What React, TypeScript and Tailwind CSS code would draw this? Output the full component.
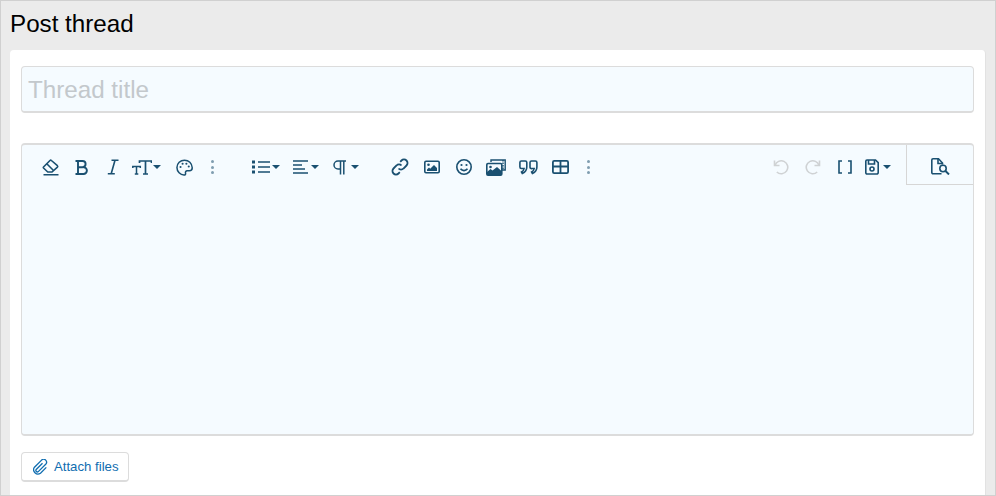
const iconClass = "fill-none stroke-[#1a5071] stroke-[1.6]"

function Caret({ gap = "ml-[2px]" }: { gap?: string }) {
  return <span className={"h-0 w-0 border-x-[4px] border-t-[4px] border-x-transparent border-t-[#1a5071] " + gap} />
}

function Dots() {
  return (
    <div className="flex w-[3px] flex-col gap-[2.5px]">
      <span className="h-[3px] w-[3px] rounded-full bg-[#7f9db0]" />
      <span className="h-[3px] w-[3px] rounded-full bg-[#7f9db0]" />
      <span className="h-[3px] w-[3px] rounded-full bg-[#7f9db0]" />
    </div>
  )
}

function Eraser() {
  return (
    <svg width="18" height="18" viewBox="0 0 18 18" className={iconClass}>
      <path d="M1.500 9 8 2.500a1 1 0 0 1 1.400 0l6 5.200a1 1 0 0 1 0 1.400L10 14H5.800L1.500 10a.7.7 0 0 1 0-1z" />
      <path d="m4.800 5.800 6.700 6.700M1.500 16.800h15" />
    </svg>
  )
}

function Bold() {
  return (
    <svg width="13" height="15" viewBox="0 0 13 15" className={iconClass}>
      <path d="M.5 1H7.500a3 3 0 0 1 0 6.200H3M3 1v13M.5 14H8.500a3.400 3.400 0 0 0 0-6.800" strokeWidth="1.900" />
    </svg>
  )
}

function Italic() {
  return (
    <svg width="12" height="16" viewBox="0 0 12 16" className={iconClass}>
      <path d="M4.500 1.200h7M.8 14.800h7M8 1.200 4.200 14.800" />
    </svg>
  )
}

function TextSize() {
  return (
    <svg width="20" height="15" viewBox="0 0 20 15" className={iconClass}>
      <path d="M7.500 3V1h12v2M13.500 1v13M11 14h5" strokeWidth="1.700" />
      <path d="M.8 8V6.500h7.500V8M4.500 6.500V14M2.800 14h3.500" strokeWidth="1.500" />
    </svg>
  )
}

function Palette() {
  return (
    <svg width="17" height="17" viewBox="0 0 18 18" className={iconClass}>
      <path d="M9 1.200C4.600 1.200 1 4.600 1 9s3.600 8 7.400 8c1.500 0 2-1 1.700-2-.4-1.300.2-2.500 1.700-2.500h2.400c1.800 0 3-1.300 3-3.200C17 4.500 13.400 1.200 9 1.200z" />
      <g className="fill-[#1a5071] stroke-none">
        <circle cx="4.800" cy="8.500" r="1.100" />
        <circle cx="7" cy="5" r="1.100" />
        <circle cx="11" cy="5" r="1.100" />
        <circle cx="13.500" cy="8" r="1.100" />
      </g>
    </svg>
  )
}

function ListIcon() {
  return (
    <svg width="18" height="14" viewBox="0 0 18 14" className={iconClass}>
      <path d="M6 2h12M6 7h12M6 12h12" strokeWidth="1.500" />
      <g className="fill-[#1a5071] stroke-none">
        <rect x="0" y="0.500" width="3" height="3" />
        <rect x="0" y="5.500" width="3" height="3" />
        <rect x="0" y="10.500" width="3" height="3" />
      </g>
    </svg>
  )
}

function AlignIcon() {
  return (
    <svg width="15" height="14" viewBox="0 0 15 14" className={iconClass}>
      <path d="M0 1h15M0 5h9M0 9h12M0 13h15" strokeWidth="1.300" />
    </svg>
  )
}

function Paragraph() {
  return (
    <svg width="13" height="15" viewBox="0 0 13 15" className={iconClass}>
      <path d="M13 1H5a4 4 0 0 0 0 8h2.500M7.500 1v13.500M10.800 1v13.500" strokeWidth="1.500" />
    </svg>
  )
}

function LinkIcon() {
  return (
    <svg width="18" height="18" viewBox="0 0 18 18" className={iconClass}>
      <path d="M7.500 10.500a3.400 3.400 0 0 0 5 0l3-3a3.500 3.500 0 0 0-5-5l-1.300 1.300" strokeWidth="1.800" />
      <path d="M10.500 7.500a3.400 3.400 0 0 0-5 0l-3 3a3.500 3.500 0 0 0 5 5l1.300-1.300" strokeWidth="1.800" />
    </svg>
  )
}

function ImageIcon() {
  return (
    <svg width="16" height="14" viewBox="0 0 16 14" className={iconClass}>
      <rect x="0.800" y="1.300" width="14.400" height="11.400" rx="1.200" />
      <path className="fill-[#1a5071] stroke-none" d="M3 11V9.500l2-2 1.200 1.200L10 5l3 3v3z" />
      <circle className="fill-[#1a5071] stroke-none" cx="4.500" cy="4.800" r="1.300" />
    </svg>
  )
}

function Smile() {
  return (
    <svg width="16" height="16" viewBox="0 0 16 16" className={iconClass}>
      <circle cx="8" cy="8" r="7.200" />
      <path d="M4.500 9.800c1.800 2.400 5.200 2.400 7 0" />
      <circle className="fill-[#1a5071] stroke-none" cx="5.500" cy="6" r="1.100" />
      <circle className="fill-[#1a5071] stroke-none" cx="10.500" cy="6" r="1.100" />
    </svg>
  )
}

function Gallery() {
  return (
    <svg width="20" height="17" viewBox="0 0 20 17" className={iconClass}>
      <path d="M5 3V1h14.200v10H16" strokeWidth="1.400" />
      <path d="M17 1v10" strokeWidth="1.400" strokeDasharray="1.500 1" />
      <rect x="0.800" y="4.500" width="15" height="11.700" rx="1.200" />
      <path className="fill-[#1a5071] stroke-none" d="M1 16v-3l3.500-3 2 1.500L11 8l4.500 4v4z" />
      <circle className="fill-[#1a5071] stroke-none" cx="4.500" cy="8" r="1.300" />
    </svg>
  )
}

function Quote() {
  return (
    <svg width="19" height="15" viewBox="0 0 19 15" className={iconClass}>
      <path d="M.9 2.500A1.500 1.500 0 0 1 2.400 1h3.900a1.500 1.500 0 0 1 1.500 1.500v4.500c0 3-1.700 5.200-4.500 6.500l-.8-1.500c1.500-.8 2.400-1.900 2.600-3.500H2.400A1.500 1.500 0 0 1 .9 7z" />
      <path d="M11 2.500A1.500 1.500 0 0 1 12.500 1h3.900a1.500 1.500 0 0 1 1.500 1.500v4.500c0 3-1.700 5.200-4.500 6.500l-.8-1.500c1.500-.8 2.400-1.900 2.600-3.500h-2.100A1.500 1.500 0 0 1 11 7z" />
    </svg>
  )
}

function TableIcon() {
  return (
    <svg width="17" height="14" viewBox="0 0 17 14" className={iconClass}>
      <rect x="0.900" y="0.900" width="15.200" height="12.200" rx="1.300" strokeWidth="1.800" />
      <path d="M0 6.500h17M8.500 1v12" strokeWidth="1.800" />
    </svg>
  )
}

function Undo({ flip }: { flip?: boolean }) {
  return (
    <svg width="16" height="16" viewBox="0 0 16 16" className={"fill-none stroke-[#cfd2d4] stroke-[1.6] " + (flip ? "-scale-x-100" : "")}>
      <path d="M1.500 1.500v5h5" />
      <path d="M2 6.500A6.500 6.500 0 1 1 3.800 13" />
    </svg>
  )
}

function Brackets() {
  return (
    <svg width="14" height="14" viewBox="0 0 14 14" className={iconClass}>
      <path d="M4 1H1v12h3M10 1h3v12h-3" strokeWidth="1.600" />
    </svg>
  )
}

function Save() {
  return (
    <svg width="14" height="16" viewBox="0 0 14 16" className={iconClass}>
      <path d="M2 1h8.500L13.200 3.700V13.500A1.500 1.500 0 0 1 11.700 15H2A1.200 1.200 0 0 1 .8 13.800V2.200A1.200 1.200 0 0 1 2 1z" />
      <path d="M3.500 1v4h6V1" />
      <circle cx="7" cy="10" r="2" />
    </svg>
  )
}

function Preview() {
  return (
    <svg width="19" height="17" viewBox="0 0 19 17" className={iconClass}>
      <path d="M10.500 15.800H2a1.200 1.200 0 0 1-1.200-1.200V2A1.200 1.200 0 0 1 2 .8h5.500L11.500 5v1.500" />
      <path d="M7 1v4.500h4.500" />
      <circle cx="12" cy="10.500" r="3.200" />
      <path d="m14.500 13 3.500 3.500" strokeWidth="1.900" />
    </svg>
  )
}

function Paperclip() {
  return (
    <svg width="15" height="16" viewBox="0 0 15 16" className="fill-none stroke-[#0f6db0] stroke-[1.3]">
      <path d="M9.500 4.200 3.200 10.500a1.500 1.500 0 0 0 2.100 2.100l7.400-7.400a2.900 2.900 0 0 0-4.100-4.100L1.500 8.200a4.300 4.300 0 0 0 6 6l5.800-5.800" />
    </svg>
  )
}

function Cell({ w, children }: { w: string; children: React.ReactNode }) {
  return <div className={"flex h-[44px] items-center justify-center " + w}>{children}</div>
}

export default function App() {
  return (
    <div className="flex h-[496px] w-[996px] flex-col border border-[#d0d0d0] bg-[#ebebeb] px-[9px] font-['Liberation_Sans',Arial,sans-serif]">
      <h1 className="h-[49px] pt-[9px] text-[24.2px] leading-[28px] text-black">Post thread</h1>
      <div className="flex min-h-0 flex-1 flex-col rounded-t-[4px] border-r border-[#e2e2e2] bg-white px-[11px] pt-[16px]">
        <input
          placeholder="Thread title"
          className="h-[47px] w-full rounded-[4px] border border-b-2 border-[#dcdcdc] bg-[#f5fbff] px-[6px] pt-[2px] text-[24.2px] outline-none placeholder:text-[#c3c8cc]"
        />
        <div className="mt-[30px] h-[293px] rounded-[4px] border border-t-2 border-b-2 border-[#dcdcdc] bg-[#f5fbff]">
          <div className="flex items-start">
            <div className="flex items-center pl-[13px]">
              <Cell w="w-[31px]"><Eraser /></Cell>
              <Cell w="w-[31px]"><Bold /></Cell>
              <Cell w="w-[31px]"><Italic /></Cell>
              <Cell w="w-[36px]"><TextSize /><Caret gap="ml-[1px]" /></Cell>
              <Cell w="w-[31px] ml-[5px]"><Palette /></Cell>
              <Cell w="w-[25px]"><Dots /></Cell>
              <Cell w="w-[40px] ml-[21px]"><ListIcon /><Caret /></Cell>
              <Cell w="w-[40px]"><AlignIcon /><Caret gap="ml-[3px]" /></Cell>
              <Cell w="w-[40px]"><Paragraph /><Caret gap="ml-[5px]" /></Cell>
              <Cell w="w-[32px] ml-[18px]"><LinkIcon /></Cell>
              <Cell w="w-[32px]"><ImageIcon /></Cell>
              <Cell w="w-[32px]"><Smile /></Cell>
              <Cell w="w-[32px]"><Gallery /></Cell>
              <Cell w="w-[32px]"><Quote /></Cell>
              <Cell w="w-[32px]"><TableIcon /></Cell>
              <Cell w="w-[24px]"><Dots /></Cell>
            </div>
            <div className="ml-auto flex items-center pr-[11px]">
              <Cell w="w-[32px]"><Undo /></Cell>
              <Cell w="w-[32px]"><Undo flip /></Cell>
              <Cell w="w-[32px]"><Brackets /></Cell>
              <Cell w="w-[34px]"><Save /><Caret gap="ml-[4px]" /></Cell>
            </div>
            <div className="flex h-[40px] w-[67px] items-center justify-center rounded-tr-[3px] border-b border-l border-[#d6d6d6] pt-[4px]">
              <Preview />
            </div>
          </div>
        </div>
        <button className="mt-[16px] flex h-[30px] w-[108px] items-center gap-[6px] rounded-[4px] border border-b-2 border-[#dcdcdc] bg-white pl-[11px] text-[13.2px] text-[#0f6db0]">
          <Paperclip />
          Attach files
        </button>
      </div>
    </div>
  )
}
